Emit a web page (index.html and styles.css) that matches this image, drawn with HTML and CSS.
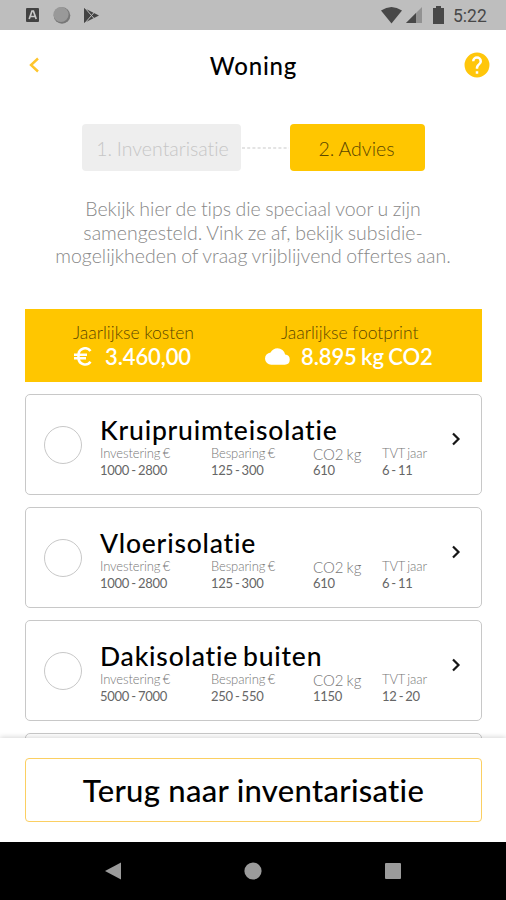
FILE: index.html
```html
<!DOCTYPE html>
<html lang="nl">
<head>
<meta charset="utf-8">
<title>Woning</title>
<link rel="stylesheet" href="styles.css">
</head>
<body>
<div class="status">
  <svg class="notifications" width="80" height="20" viewBox="0 0 80 20">
    <rect x="1" y="3" width="13" height="14" rx="1" fill="#424242"/>
    <path d="M4.2 14 7 6h1.4l2.8 8M5.5 11.5h4.5" fill="none" stroke="#c8c8c8" stroke-width="1.7"/>
    <circle cx="37" cy="10.5" r="8.3" fill="#777"/><circle cx="36" cy="9.5" r="7.6" fill="#999"/>
    <path d="M59 3v15L74 10.500z" fill="#444"/>
    <path d="M60 3 69.500 14M60 18 69.500 7" stroke="#bebebe" stroke-width="1"/>
  </svg>
  <svg class="signals" width="64" height="20" viewBox="0 0 64 20">
    <path d="M0 5.500Q10.500-1.500 21 5.500L10.500 18.500z" fill="#484848"/>
    <path d="M25 18 41 2v16z" fill="#929292"/><path d="M25 18 35 8v10z" fill="#484848"/>
    <path d="M52 3h3V1h5v2h3v16H52z" fill="#484848"/>
  </svg>
  <span class="clock">5:22</span>
</div>
<header class="header">
  <svg class="back" width="12" height="16" viewBox="0 0 12 16"><path d="M10 1.500 3 8l7 6.500" fill="none" stroke="#fec52b" stroke-width="2.400"/></svg>
  <h1>Woning</h1>
  <svg class="help" width="26" height="26" viewBox="0 0 24 24"><path fill="#ffc60b" d="M12 .5a11.500 11.500 0 1 0 0 23 11.500 11.500 0 0 0 0-23zm1.150 19.550h-2.300v-2.300h2.300zm2.380-8.910-1.030 1.060c-.83.830-1.350 1.530-1.350 3.250h-2.300v-.58c0-1.260.52-2.410 1.350-3.250l1.430-1.450c.42-.41.67-.99.67-1.620a2.300 2.300 0 0 0-4.600 0H7.400a4.600 4.600 0 0 1 9.200 0c0 1.010-.41 1.930-1.070 2.590z"/></svg>
</header>
<nav class="steps">
  <div class="step step-done"><span>1. Inventarisatie</span></div>
  <svg class="link" width="48" height="2"><path d="M1 1h47" stroke="#c9c9c9" stroke-width="1.200" stroke-dasharray="3 2.200"/></svg>
  <div class="step step-active"><span>2. Advies</span></div>
</nav>
<p class="intro">Bekijk hier de tips die speciaal voor u zijn<br>samengesteld. Vink ze af, bekijk subsidie-<br>mogelijkheden of vraag vrijblijvend offertes aan.</p>
<section class="summary">
  <div class="total cost">
    <span class="label">Jaarlijkse kosten</span>
    <div class="amount"><svg width="19" height="19" viewBox="0 0 19 19"><path d="M17.500 4A6.700 6.700 0 0 0 5.500 7.200v4.300a6.700 6.700 0 0 0 12 3.300M1 7.800h13M1 11.200h12" fill="none" stroke="#fff" stroke-width="2.600"/></svg><b>3.460,00</b></div>
  </div>
  <div class="total footprint">
    <span class="label">Jaarlijkse footprint</span>
    <div class="amount"><svg width="25" height="17" viewBox="0 0 24 16"><path fill="#fff" d="M19.350 6.040A7.490 7.490 0 0 0 12 0C9.110 0 6.600 1.640 5.350 4.040A6 6 0 0 0 6 16h13a5 5 0 0 0 .35-9.960z"/></svg><b>8.895 kg CO2</b></div>
  </div>
</section>
<main class="list">
  <article class="card">
    <i class="check"></i>
    <div class="body"><h2>Kruipruimteisolatie</h2>
      <dl><div><dt>Investering €</dt><dd>1000 - 2800</dd></div><div><dt>Besparing €</dt><dd>125 - 300</dd></div><div class="co2"><dt>CO2 kg</dt><dd>610</dd></div><div><dt>TVT jaar</dt><dd>6 - 11</dd></div></dl></div>
    <svg class="go" width="10" height="14" viewBox="0 0 10 14"><path d="M2 1.500 7.500 7 2 12.500" fill="none" stroke="#161616" stroke-width="2.200"/></svg>
  </article>
  <article class="card">
    <i class="check"></i>
    <div class="body"><h2>Vloerisolatie</h2>
      <dl><div><dt>Investering €</dt><dd>1000 - 2800</dd></div><div><dt>Besparing €</dt><dd>125 - 300</dd></div><div class="co2"><dt>CO2 kg</dt><dd>610</dd></div><div><dt>TVT jaar</dt><dd>6 - 11</dd></div></dl></div>
    <svg class="go" width="10" height="14" viewBox="0 0 10 14"><path d="M2 1.500 7.500 7 2 12.500" fill="none" stroke="#161616" stroke-width="2.200"/></svg>
  </article>
  <article class="card">
    <i class="check"></i>
    <div class="body"><h2>Dakisolatie buiten</h2>
      <dl><div><dt>Investering €</dt><dd>5000 - 7000</dd></div><div><dt>Besparing €</dt><dd>250 - 550</dd></div><div class="co2"><dt>CO2 kg</dt><dd>1150</dd></div><div><dt>TVT jaar</dt><dd>12 - 20</dd></div></dl></div>
    <svg class="go" width="10" height="14" viewBox="0 0 10 14"><path d="M2 1.500 7.500 7 2 12.500" fill="none" stroke="#161616" stroke-width="2.200"/></svg>
  </article>
  <article class="card"></article>
</main>
<footer class="footer"><button class="return">Terug naar inventarisatie</button></footer>
<div class="navbar">
  <svg width="18" height="18" viewBox="0 0 18 18"><path d="M1 9 17 .5v17z" fill="#9b9b9b"/></svg>
  <svg width="18" height="18" viewBox="0 0 18 18"><circle cx="9" cy="9" r="8.600" fill="#9b9b9b"/></svg>
  <svg width="18" height="18" viewBox="0 0 18 18"><rect x="1" y="1" width="16" height="16" rx="1" fill="#9b9b9b"/></svg>
</div>
</body>
</html>
```

FILE: styles.css
```css
* { box-sizing: border-box; }
body {
  margin: 0;
  width: 506px;
  height: 900px;
  overflow: hidden;
  display: flex;
  flex-direction: column;
  background: #fff;
  font-family: Lato, "Liberation Sans", sans-serif;
  font-variant-ligatures: none;
  color: #000;
}
h1, h2, p, dl, dd { margin: 0; }
svg { display: block; flex: none; }
.status {
  height: 30px;
  flex: none;
  background: #bebebe;
  display: flex;
  align-items: center;
  padding: 0 18px 0 25px;
}
.signals { margin-left: auto; }
.clock {
  width: 35px;
  margin-left: 8px;
  font: 400 17.500px/30px Roboto, sans-serif;
  color: #484848;
  padding-top: 2px;
}
.header {
  height: 70px;
  flex: none;
  display: flex;
  align-items: center;
  justify-content: space-between;
  padding: 0 16px 0 28px;
}
.header h1 { font-size: 24px; font-weight: 500; line-height: 30px; padding: 2px 0 0 3px; letter-spacing: .8px; }
.steps { display: flex; align-items: center; margin: 24px 0 0 82px; height: 47px; flex: none; }
.step {
  height: 47px;
  border-radius: 4px;
  display: flex;
  align-items: center;
  justify-content: center;
  font-size: 19.500px;
  font-weight: 300;
  padding-top: 2px;
  word-spacing: -.500px;
}
.step-done { width: 159px; background: #eee; color: #c6c6c6; padding-left: 2px; }
.step-active { width: 135px; margin-left: 1px; background: #ffc600; color: #5b4700; padding-right: 2px; }
.intro {
  flex: none;
  margin-top: 26px;
  text-align: center;
  font-size: 19.500px;
  font-weight: 300;
  line-height: 23.500px;
  word-spacing: -.800px;
  color: #888;
}
.summary {
  flex: none;
  width: 457px;
  height: 73px;
  margin: 41px 0 0 25px;
  background: #ffc600;
  display: flex;
  padding-top: 12px;
}
.cost { margin-left: 48px; width: 192px; }
.label { display: block; font-size: 17.500px; line-height: 24px; font-weight: 300; color: #5b4700; }
.footprint .label { padding-left: 16px; }
.amount { display: flex; align-items: center; height: 24px; color: #fff; font-size: 22px; letter-spacing: -.1px; word-spacing: -1px; }
.amount b { font-weight: 600; }
.cost b { margin-left: 13px; }
.footprint b { margin-left: 11px; }
.list {
  flex: 1;
  min-height: 0;
  overflow: hidden;
  padding: 12px 24px 0 25px;
  display: flex;
  flex-direction: column;
  gap: 12.300px;
}
.card {
  height: 101px;
  flex: none;
  border: 1.500px solid #c8c8c8;
  border-radius: 5px;
  display: flex;
  align-items: flex-start;
}
.check { width: 38px; height: 38px; border: 1.500px solid #c8c8c8; border-radius: 50%; margin: 31px 0 0 18px; flex: none; }
.body { margin: 20px 0 0 18px; width: 346px; }
.body h2 { font-size: 26.500px; line-height: 30px; font-weight: 500; letter-spacing: .8px; word-spacing: -2.500px; white-space: nowrap; }
.body dl { display: grid; grid-template-columns: 111px 102px 69px 64px; white-space: nowrap; }
dt { font-size: 13px; line-height: 16px; font-weight: 300; color: #777; letter-spacing: -.1px; word-spacing: -1px; }
dd { font-size: 13px; line-height: 18px; color: #666; letter-spacing: -.25px; word-spacing: -1px; }
.co2 dt { font-size: 15px; padding-top: 1px; height: 16px; letter-spacing: 0; }
.go { margin: 37px 0 0 5px; }
.footer {
  height: 104px;
  flex: none;
  padding: 20px 24px 0 25px;
  background: #fff;
  box-shadow: 0 -1px 5px rgba(0, 0, 0, .16);
  position: relative;
}
.return {
  display: block;
  width: 457px;
  height: 64px;
  border: 1.500px solid #fbcf62;
  border-radius: 4px;
  background: #fff;
  color: #000;
  font: 500 31px/60px Lato, sans-serif;
  font-variant-ligatures: none;
  letter-spacing: .3px;
  padding: 0;
  white-space: nowrap;
}
.navbar {
  height: 58px;
  flex: none;
  background: #000;
  display: flex;
  align-items: center;
  justify-content: space-between;
  padding: 0 104px;
}
```
